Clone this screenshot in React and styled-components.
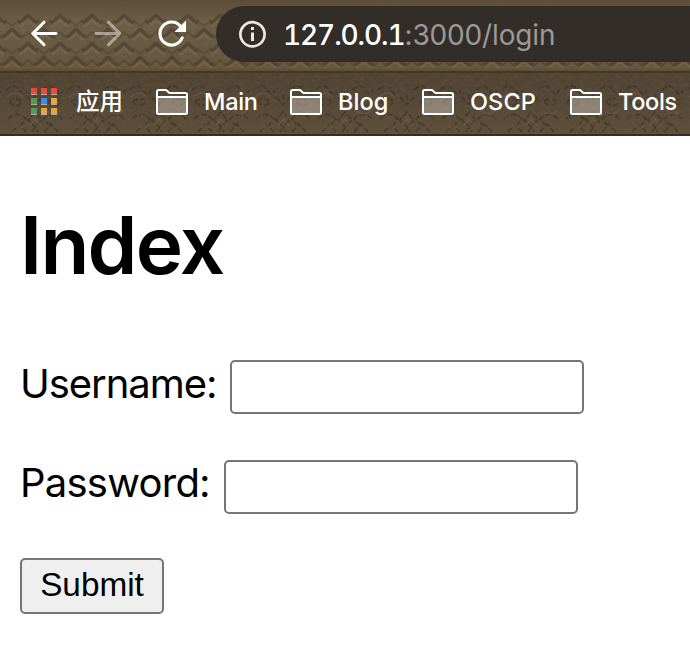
import React from "react";
import styled, { createGlobalStyle } from "styled-components";

const GlobalStyle = createGlobalStyle`
  html, body { margin: 0; padding: 0; background: #fff; }
  body { overflow: hidden; }
  *, *::before, *::after { box-sizing: border-box; }
`;

const Window = styled.div`
  width: 100%;
  height: 100vh;
  display: flex;
  flex-direction: column;
  overflow: hidden;
  background: #fff;
  font-family: Inter, "Noto Sans CJK SC", sans-serif;
`;

const Chrome = styled.header`
  position: relative;
  flex: none;
  height: 136px;
  isolation: isolate;
  overflow: hidden;
  background: #625139;
  border-bottom: 2px solid #372d22;
`;

const Texture = styled.svg`
  position: absolute;
  inset: 0;
  z-index: -1;
`;

const Toolbar = styled.div`
  height: 72px;
  padding: 6px 0 0 29px;
  display: flex;
`;

const NavButton = styled.span`
  width: 64px;
  height: 56px;
  display: flex;
  align-items: center;
  flex: none;
  color: #fff;
  opacity: ${(p) => (p.$disabled ? 0.46 : 1)};
`;

const AddressBar = styled.div`
  flex: 1;
  min-width: 0;
  height: 56px;
  margin-left: -5px;
  padding-left: 22px;
  display: flex;
  align-items: center;
  background: #332d29;
  border-radius: 28px 0 0 28px;
`;

const Url = styled.span`
  margin-left: 16px;
  font-size: 28px;
  line-height: 56px;
  letter-spacing: -0.15px;
  white-space: nowrap;
  color: #9d9995;
  padding-top: 1px;
`;

const Host = styled.span`
  color: #fff;
  font-weight: 450;
  letter-spacing: -1.1px;
  font-feature-settings: "tnum" 1;
`;

const Bookmarks = styled.nav`
  height: 62px;
  padding-left: 31px;
  display: flex;
  align-items: center;
`;

const Bookmark = styled.span`
  width: ${(p) => p.$width}px;
  flex: none;
  display: flex;
  align-items: center;
  gap: ${(p) => p.$gap || 16}px;
  padding-bottom: 2px;
  color: #fff;
  font-size: 23.5px;
  font-weight: 500;
  line-height: 32px;
  letter-spacing: ${(p) => p.$spacing || 0}px;
  white-space: nowrap;
  svg { flex: none; }
`;

const Page = styled.main`
  padding: 56px 20px 0;
  color: #000;
`;

const Title = styled.h1`
  margin: 0;
  font-size: 80px;
  font-weight: 600;
  line-height: 106px;
  letter-spacing: -1.75px;
`;

const Field = styled.label`
  display: flex;
  align-items: flex-start;
  height: 54px;
  margin-top: ${(p) => p.$top}px;
  gap: ${(p) => p.$gap}px;
  font-size: 40px;
  line-height: ${(p) => p.$line}px;
  white-space: nowrap;
`;

const FieldText = styled.span`
  flex: none;
  width: ${(p) => p.$width}px;
  letter-spacing: ${(p) => p.$spacing}px;
`;

const Input = styled.input`
  width: 354px;
  height: 54px;
  margin: 0;
  padding: 0 6px;
  border: 2px solid #767676;
  border-radius: 5px;
  background: #fff;
  outline: none;
  font: 33px "Liberation Sans", Arial, sans-serif;
`;

const Submit = styled.button`
  display: block;
  width: 144px;
  height: 56px;
  margin: 44px 0 0;
  padding: 0 0 3px;
  border: 2px solid #767676;
  border-radius: 5px;
  background: #efefef;
  color: #000;
  font: 33.33px/48px "Liberation Sans", Arial, sans-serif;
`;

function Leather() {
  return (
    <Texture width="690" height="136" aria-hidden="true">
      <defs>
        <linearGradient id="shade" x1="0" y1="0" x2="0" y2="1">
          <stop offset="0" stopColor="#5c4d39" />
          <stop offset="0.16" stopColor="#6f6048" />
          <stop offset="0.5" stopColor="#66573f" />
          <stop offset="0.54" stopColor="#504333" />
          <stop offset="0.75" stopColor="#564837" />
          <stop offset="1" stopColor="#5e503a" />
        </linearGradient>
        <pattern id="lattice" width="32" height="28" x="12" y="12" patternUnits="userSpaceOnUse">
          <g fill="none" strokeLinejoin="bevel">
            <path d="M6 11 10 9 16 3 22 9 26 11M-10 25-6 23 0 17 6 23 10 25M22 25 26 23 32 17 38 23 42 25" stroke="#382d21" strokeWidth="3.6" opacity=".46" />
            <path d="M0 14 7 8M32 14 25 8M10 26 16 20 22 26" stroke="#463a2a" strokeWidth="2" opacity=".45" />
            <path d="M8 15 16 8 24 15M-8 29 0 22 8 29M24 29 32 22 40 29" stroke="#8e7c5f" strokeWidth="2.4" opacity=".28" />
          </g>
        </pattern>
        <pattern id="ornament" width="62" height="54" x="4" y="80" patternUnits="userSpaceOnUse">
          <g fill="none" stroke="#31271c" strokeWidth="2" strokeDasharray="6 2" opacity=".48">
            <path d="M2 10q8-8 13 0t8 0M38 10q8-8 13 0t8 0M5 22q7-7 13 0-6 7-13 0M44 22q7-7 13 0-6 7-13 0M31 14v12M24 17l7 8 7-8M4 39q9-9 18 0l-5 6M58 39q-9-9-18 0l5 6M31 32l-7 8 7 7 7-7zM8 52l7-8 7 8M40 52l7-8 7 8M28 52l3-4 3 4" />
          </g>
          <path d="M3 17q10-8 15 0M43 31q8 6 14-1M26 46l5-7 6 7M10 48l5-4 4 4" fill="none" stroke="#857150" strokeWidth="1.5" opacity=".32" />
        </pattern>
        <filter id="grain" x="0" y="0" width="100%" height="100%">
          <feTurbulence type="fractalNoise" baseFrequency=".2 .25" numOctaves="3" seed="8" />
          <feColorMatrix values="0 0 0 0 .12  0 0 0 0 .09  0 0 0 0 .05  1.8 0 0 0 -.7" />
        </filter>
      </defs>
      <rect width="690" height="136" fill="url(#shade)" />
      <rect y="12" width="690" height="58" fill="url(#lattice)" />
      <rect y="80" width="690" height="54" fill="url(#ornament)" />
      <rect width="690" height="136" filter="url(#grain)" opacity=".6" />
      <rect y="71" width="690" height="2" fill="#43382a" />
    </Texture>
  );
}

function Arrow({ forward }) {
  return (
    <svg width="30" height="30" viewBox="0 0 30 30" fill="none" stroke="currentColor" strokeWidth="3" strokeLinecap="round" strokeLinejoin="round">
      <path d={forward ? "M3 14.5H26M15.5 3.2 26.8 14.5 15.5 25.8" : "M27 14.5H4M15 3.2 3.7 14.5 15 25.8"} />
    </svg>
  );
}

function Reload() {
  return (
    <svg width="30" height="30" viewBox="0 0 30 30">
      <path d="M25.2 18.8A11.5 11.5 0 1 1 23.2 7" fill="none" stroke="currentColor" strokeWidth="3.1" strokeLinecap="round" />
      <path d="M29 1.5V13H17.5z" fill="currentColor" />
    </svg>
  );
}

function Info() {
  return (
    <svg width="29" height="28" viewBox="0 0 29 28" fill="none" stroke="#e9e7e5">
      <circle cx="14.5" cy="14.3" r="12.1" strokeWidth="2.7" />
      <path d="M14.5 12.5V21M14.5 7V10" strokeWidth="3" />
    </svg>
  );
}

function Apps() {
  const colors = ["#e64b3c", "#e64b3c", "#e64b3c", "#549b60", "#3d8af0", "#e8a63a", "#549b60", "#e8a63a", "#e8a63a"];
  return (
    <svg width="27" height="28" viewBox="0 0 27 28" shapeRendering="crispEdges">
      {colors.map((color, i) => (
        <g key={i} transform={`translate(${(i % 3) * 10} ${Math.floor(i / 3) * 10})`}>
          <rect width="6" height="7" fill="#b4aaa0" />
          <rect width="6" height="6" fill={color} />
        </g>
      ))}
    </svg>
  );
}

function Folder() {
  return (
    <svg width="32" height="26" viewBox="0 0 32 26">
      <path d="M1 8H31V25H1z" fill="#c8c0b6" opacity=".48" />
      <path d="M1 24V2.5Q1 1 2.5 1H10L13.5 4H29.5Q31 4 31 5.5V23.5Q31 25 29.5 25H2.5Q1 25 1 23.5M1 8H31" fill="none" stroke="#fff" strokeWidth="2" />
    </svg>
  );
}

const folders = [
  { name: "Main", width: 134, spacing: -0.3 },
  { name: "Blog", width: 132, spacing: 0.1 },
  { name: "OSCP", width: 148, spacing: 0.1 },
  { name: "Tools", width: 120, spacing: -0.3 },
];

export default function App() {
  return (
    <Window>
      <GlobalStyle />
      <Chrome>
        <Leather />
        <Toolbar>
          <NavButton><Arrow /></NavButton>
          <NavButton $disabled><Arrow forward /></NavButton>
          <NavButton><Reload /></NavButton>
          <AddressBar>
            <Info />
            <Url><Host>127.0.0.1</Host>:3000/login</Url>
          </AddressBar>
        </Toolbar>
        <Bookmarks>
          <Bookmark $width={125} $gap={18}><Apps />应用</Bookmark>
          {folders.map((f) => (
            <Bookmark key={f.name} $width={f.width} $spacing={f.spacing}><Folder />{f.name}</Bookmark>
          ))}
        </Bookmarks>
      </Chrome>
      <Page>
        <Title>Index</Title>
        <Field $top={62} $gap={10} $line={48}>
          <FieldText $width={200} $spacing={-1.05}>Username:</FieldText>
          <Input type="text" />
        </Field>
        <Field $top={46} $gap={10} $line={46}>
          <FieldText $width={194} $spacing={-0.75}>Password:</FieldText>
          <Input type="password" />
        </Field>
        <Submit type="button">Submit</Submit>
      </Page>
    </Window>
  );
}
